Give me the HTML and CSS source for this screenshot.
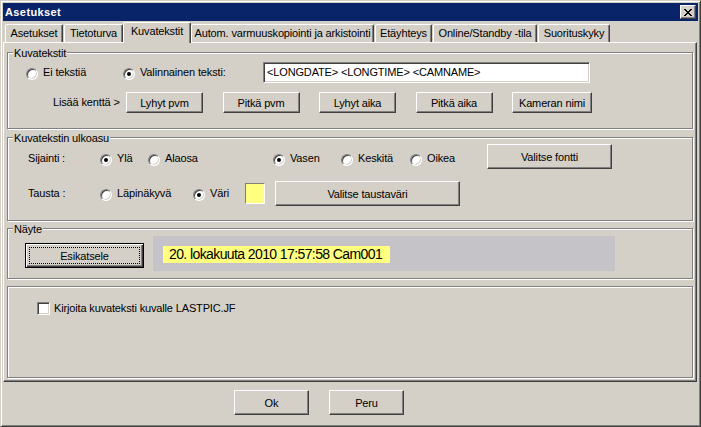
FILE: index.html
```html
<!DOCTYPE html>
<html lang="fi">
<head>
<meta charset="utf-8">
<title>Asetukset</title>
<link rel="stylesheet" href="styles.css">
</head>
<body>
<div class="window">
  <div class="titlebar">
    <span class="title">Asetukset</span>
    <div class="close">
      <svg width="8" height="7" viewBox="0 0 8 7" shape-rendering="crispEdges"><path fill="#000" d="M0 0h2v1H0zM6 0h2v1H6zM1 1h2v1H1zM5 1h2v1H5zM2 2h4v1H2zM3 3h2v1H3zM2 4h4v1H2zM1 5h2v1H1zM5 5h2v1H5zM0 6h2v1H0zM6 6h2v1H6z"/></svg>
    </div>
  </div>

  <div class="tabs">
    <div class="tab">Asetukset</div>
    <div class="tab">Tietoturva</div>
    <div class="tab active">Kuvatekstit</div>
    <div class="tab">Autom. varmuuskopiointi ja arkistointi</div>
    <div class="tab">Etäyhteys</div>
    <div class="tab">Online/Standby -tila</div>
    <div class="tab">Suorituskyky</div>
  </div>

  <div class="panel">
    <div class="group group-text">
      <span class="legend">Kuvatekstit</span>
      <div class="row row-mode">
        <label class="opt opt-none"><span class="radio"></span>Ei tekstiä</label>
        <label class="opt opt-custom"><span class="radio checked"></span>Valinnainen teksti:</label>
        <div class="edit">&lt;LONGDATE&gt; &lt;LONGTIME&gt; &lt;CAMNAME&gt;</div>
      </div>
      <div class="row row-fields">
        <span class="lbl lbl-fields">Lisää kenttä &gt;</span>
        <div class="btn btn-field">Lyhyt pvm</div>
        <div class="btn btn-field">Pitkä pvm</div>
        <div class="btn btn-field">Lyhyt aika</div>
        <div class="btn btn-field">Pitkä aika</div>
        <div class="btn btn-field btn-field-wide">Kameran nimi</div>
      </div>
    </div>

    <div class="group group-look">
      <span class="legend">Kuvatekstin ulkoasu</span>
      <div class="row row-pos">
        <span class="lbl lbl-side">Sijainti :</span>
        <label class="opt opt-top"><span class="radio checked"></span>Ylä</label>
        <label class="opt opt-bottom"><span class="radio"></span>Alaosa</label>
        <label class="opt opt-left"><span class="radio checked"></span>Vasen</label>
        <label class="opt opt-center"><span class="radio"></span>Keskitä</label>
        <label class="opt opt-right"><span class="radio"></span>Oikea</label>
        <div class="btn btn-font">Valitse fontti</div>
      </div>
      <div class="row row-bg">
        <span class="lbl lbl-side">Tausta :</span>
        <label class="opt opt-clear"><span class="radio"></span>Läpinäkyvä</label>
        <label class="opt opt-color"><span class="radio checked"></span>Väri</label>
        <div class="swatch"></div>
        <div class="btn btn-bgcolor">Valitse taustaväri</div>
      </div>
    </div>

    <div class="group group-preview">
      <span class="legend">Näyte</span>
      <div class="btn btn-default"><span class="focus">Esikatsele</span></div>
      <div class="preview"><span class="stamp">20. lokakuuta 2010 17:57:58 Cam001</span></div>
    </div>

    <div class="group group-save">
      <label class="check"><span class="checkbox"></span>Kirjoita kuvateksti kuvalle LASTPIC.JF</label>
    </div>
  </div>

  <div class="footer">
    <div class="btn btn-dlg">Ok</div>
    <div class="btn btn-dlg">Peru</div>
  </div>
</div>
</body>
</html>
```

FILE: styles.css
```css
* { box-sizing: border-box; }

html, body { margin: 0; padding: 0; }

body {
  width: 701px;
  height: 427px;
  overflow: hidden;
  background: #d4d0c8;
  color: #000;
  font-family: "Liberation Sans", Arial, sans-serif;
  font-size: 11px;
  letter-spacing: -0.15px;
}

.window {
  width: 701px;
  height: 427px;
  border: 1px solid;
  border-color: #d4d0c8 #404040 #404040 #d4d0c8;
  box-shadow: inset 1px 1px 0 #fff, inset -1px -1px 0 #808080;
  padding: 2px;
  display: flex;
  flex-direction: column;
}

/* title bar */
.titlebar {
  flex: none;
  height: 18px;
  background: #0a246a;
  color: #fff;
  display: flex;
  justify-content: space-between;
  align-items: flex-start;
  padding-left: 2px;
}
.title {
  font-weight: bold;
  line-height: 18px;
  letter-spacing: 0.4px;
}
.close {
  width: 16px;
  height: 14px;
  margin: 2px 2px 0 0;
  background: #d4d0c8;
  border: 1px solid;
  border-color: #fff #404040 #404040 #fff;
  box-shadow: inset -1px -1px 0 #808080;
  display: flex;
  align-items: center;
  justify-content: center;
}
.close svg { display: block; }

/* tabs */
.tabs {
  flex: none;
  height: 21px;
  display: flex;
  align-items: flex-end;
  padding-left: 2px;
}
.tab {
  flex: none;
  height: 18px;
  line-height: 16px;
  text-align: center;
  white-space: nowrap;
  border: 1px solid;
  border-bottom: 0;
  border-color: #fff #404040 transparent #fff;
  box-shadow: inset -1px 0 0 #808080;
  border-radius: 2px 2px 0 0;
  background: #d4d0c8;
}
.tab.active {
  height: 21px;
  margin-bottom: -1px;
  position: relative;
  z-index: 1;
}
.tab:nth-child(1) { width: 58px; margin-right: 1px; }
.tab:nth-child(2) { width: 59px; }
.tab:nth-child(3) { width: 68px; }
.tab:nth-child(4) { width: 183px; margin-right: 1px; }
.tab:nth-child(5) { width: 57px; margin-right: 1px; }
.tab:nth-child(6) { width: 104px; margin-right: 1px; }
.tab:nth-child(7) { width: 72px; }

/* tab page */
.panel {
  flex: none;
  width: 694px;
  height: 340px;
  border: 1px solid;
  border-color: #fff #404040 #404040 #fff;
  box-shadow: inset -1px -1px 0 #808080;
  padding: 9px 3px 0 3px;
}

.group {
  position: relative;
  border: 1px solid #808080;
  box-shadow: inset 1px 1px 0 #fff, 1px 1px 0 #fff;
}
.legend {
  position: absolute;
  top: -6px;
  left: 5px;
  padding: 0 1px;
  line-height: 13px;
  background: #d4d0c8;
  white-space: nowrap;
}

.row {
  display: flex;
  align-items: center;
}

.lbl {
  flex: none;
  line-height: 13px;
  white-space: nowrap;
}

.opt {
  flex: none;
  display: flex;
  align-items: center;
  gap: 5px;
  height: 13px;
  line-height: 13px;
  white-space: nowrap;
}

.radio {
  flex: none;
  position: relative;
  width: 12px;
  height: 12px;
  margin-top: 2px;
  border-radius: 50%;
  background: #fff;
  border: 1px solid;
  border-color: #808080 #fff #fff #808080;
  box-shadow: inset 1px 1px 0 #404040, inset -1px -1px 0 #d4d0c8;
}
.radio.checked::after {
  content: "";
  position: absolute;
  left: 3px;
  top: 3px;
  width: 4px;
  height: 4px;
  border-radius: 50%;
  background: #000;
}

.btn {
  flex: none;
  display: flex;
  align-items: center;
  justify-content: center;
  white-space: nowrap;
  background: #d4d0c8;
  border: 1px solid;
  border-color: #fff #404040 #404040 #fff;
  box-shadow: inset -1px -1px 0 #808080;
}

/* group 1 */
.group-text {
  padding: 9px 0 15px;
  margin-bottom: 8px;
}
.row-mode {
  height: 21px;
  padding-left: 18px;
}
.opt-none { width: 97px; }
.opt-custom { width: 140px; }
.edit {
  flex: none;
  width: 327px;
  height: 21px;
  background: #fff;
  border: 1px solid;
  border-color: #808080 #fff #fff #808080;
  box-shadow: inset 1px 1px 0 #404040, inset -1px -1px 0 #d4d0c8;
  padding: 0 2px 0 3px;
  line-height: 19px;
  white-space: nowrap;
  overflow: hidden;
}
.row-fields {
  height: 21px;
  margin-top: 9px;
  padding-left: 45px;
}
.lbl-fields { width: 73px; }
.btn-field {
  width: 77px;
  height: 21px;
  margin-right: 19.5px;
}
.btn-field-wide { width: 80px; }

/* group 2 */
.group-look {
  padding: 6px 0 14px;
  margin-bottom: 7px;
}
.row-pos {
  height: 25px;
  align-items: flex-start;
  padding-left: 20px;
}
.row-pos .lbl,
.row-pos .opt { margin-top: 8px; }
.row-bg {
  height: 25px;
  margin-top: 12px;
  padding-left: 20px;
}
.lbl-side { width: 72px; }
.opt-top { width: 48px; }
.opt-bottom { width: 125px; }
.opt-left { width: 68px; }
.opt-center { width: 69px; }
.opt-right { width: 77px; }
.btn-font { width: 125px; height: 25px; }
.opt-clear { width: 93px; }
.opt-color { width: 52px; }
.swatch {
  flex: none;
  width: 20px;
  height: 21px;
  margin-right: 10px;
  background: #ffff80;
  border: 1px solid;
  border-color: #808080 #fff #fff #808080;
}
.btn-bgcolor { width: 185px; height: 25px; }

/* group 3 */
.group-preview {
  display: flex;
  align-items: flex-start;
  padding: 7px 0 7px 17px;
  margin-bottom: 7px;
}
.btn-default {
  width: 119px;
  height: 25px;
  margin: 7px 9px 0 0;
  padding: 3px;
  align-items: stretch;
  border: 1px solid #000;
  box-shadow: inset 1px 1px 0 #fff, inset -1px -1px 0 #404040, inset -2px -2px 0 #808080;
}
.focus {
  flex: 1;
  display: flex;
  align-items: center;
  justify-content: center;
  border: 1px dotted #000;
}
.preview {
  flex: none;
  width: 462px;
  height: 35px;
  padding: 10px 0 0 10px;
  background: #c5c3c8;
}
.stamp {
  display: inline-block;
  vertical-align: top;
  height: 17px;
  line-height: 17px;
  padding: 0 8px 0 6px;
  background: #ffff80;
  font-size: 14px;
  letter-spacing: -0.6px;
  white-space: nowrap;
}

/* group 4 */
.group-save {
  height: 92px;
  padding: 15px 0 0 29px;
}
.check {
  display: flex;
  align-items: center;
  gap: 4px;
  line-height: 13px;
  white-space: nowrap;
}
.checkbox {
  flex: none;
  width: 13px;
  height: 13px;
  background: #fff;
  border: 1px solid;
  border-color: #808080 #fff #fff #808080;
  box-shadow: inset 1px 1px 0 #404040, inset -1px -1px 0 #d4d0c8;
}

/* dialog buttons */
.footer {
  flex: none;
  display: flex;
  gap: 20px;
  padding: 8px 0 0 231px;
}
.btn-dlg { width: 75px; height: 25px; }
```
